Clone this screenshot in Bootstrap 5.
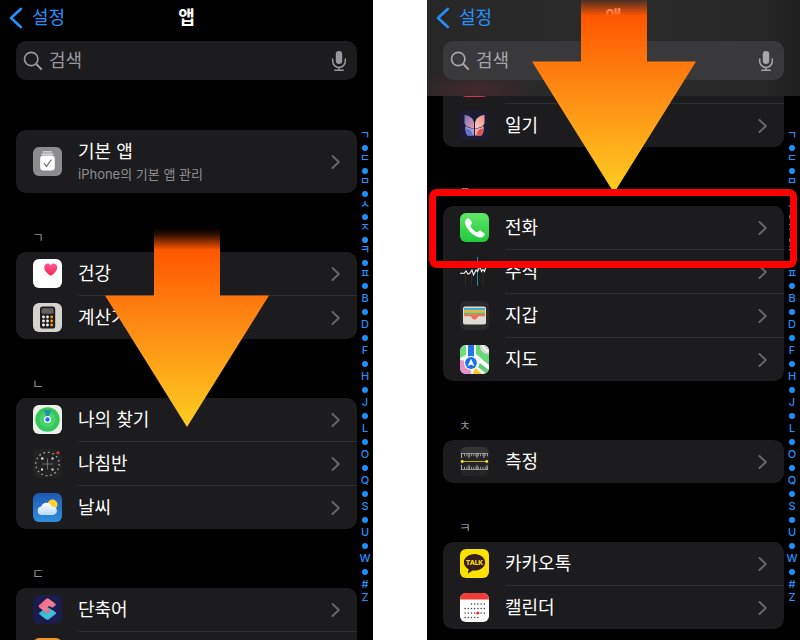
<!DOCTYPE html>
<html lang="ko" data-bs-theme="dark">
<head>
<meta charset="utf-8">
<meta name="viewport" content="width=device-width, initial-scale=1">
<title>설정 - 앱</title>
<link href="https://cdn.jsdelivr.net/npm/bootstrap@5.3.0/dist/css/bootstrap.min.css" rel="stylesheet">
<style>
  body { background: #fff; color: #fff; font-family: Inter, "Noto Sans CJK KR", sans-serif; font-size: 18px; line-height: 24px; }
  .screens { gap: 54px; height: 100vh; }
  .phone { flex: 1 1 0; min-width: 0; background: #000; }
  .phone a { text-decoration: none; }
  .title-bar { grid-template-columns: 1fr auto 1fr; height: 36px; padding: 0 9px; }
  .title-bar a { color: #2490fb; gap: 9px; }
  .title-bar h1 { font-size: 18px; line-height: 24px; font-weight: 700; }
  .top-area { padding-bottom: 16px; z-index: 1; }
  .top-area.frosted { background: radial-gradient(ellipse 60px 24px at 48px 90px, #43282c 0, transparent 100%), linear-gradient(90deg, #282728, #2b2b2c 50%, #272728 90%, #1e1e1f); }
  .search-box { height: 39px; margin: 5px 16px 0; padding: 0 10px 0 7px; border-radius: 10px; background: #1c1c1e; color: #98989f; gap: 6px; }
  .frosted .search-box { background: #39393b; color: #a5a5ab; }
  .search-box input { background: none; border: 0; outline: 0; color: inherit; padding: 0; min-width: 0; line-height: 24px; }
  .search-box input::placeholder { color: inherit; opacity: 1; }
  .search-box .voice { color: inherit; }
  .app-list { padding-left: 16px; min-width: 0; }
  .app-list.first { padding-top: 34px; }
  .app-list.scrolled { margin-top: -36px; }
  .app-group { background: #1c1c1e; border-radius: 10px; overflow: hidden; }
  .app-row { padding-left: 17px; gap: 16px; color: #fff; }
  .app-row:hover { color: #fff; }
  .app-row > svg { width: 29px; height: 29px; flex: none; border-radius: 6px; }
  .app-row > span { min-height: 43px; padding-right: 16px; }
  .app-row + .app-row > span { min-height: 44px; border-top: 1px solid #2e2e30; }
  .app-row.two-line > span { min-height: 63px; }
  .app-row.peek-top > svg { margin-top: 2px; }
  .app-row.peek-bottom > svg { margin-bottom: 2px; }
  .chev { width: 10px; height: 16px; flex: none; color: #66666a; }
  .sub-text { font-size: 13px; line-height: 20px; color: #8e8e94; }
  .letter-head { height: 59px; padding: 0 0 6px 16px; font-size: 13px; line-height: 18px; font-weight: 400; color: #8e8e94; margin: 0; }
  .index-bar { width: 16px; flex: none; margin-top: 34px; padding: 0; color: #2490fb; font-size: 11px; font-weight: 500; text-align: center; list-style: none; }
  .index-bar li { height: 13px; line-height: 13px; }
  .index-bar li.ko { height: 12px; line-height: 10px; font-size: 11px; }
  .index-bar li.dot, .index-bar li.kdot { display: flex; align-items: center; justify-content: center; }
  .index-bar li.kdot { height: 11px; }
  .index-bar li.dot::before, .index-bar li.kdot::before { content: ""; width: 6px; height: 6px; border-radius: 50%; background: #1b8ffc; }
  .index-bar li.first-latin { margin-top: 1px; }
  .arrow { position: absolute; width: 164px; height: 200px; z-index: 2; pointer-events: none; }
  .arrow-left { left: 105px; top: 228px; }
  .arrow-right { left: 105px; top: -6px; }
  .callout { position: absolute; left: 2px; right: 3px; top: 189px; height: 79px; border: 7px solid #f00; border-radius: 8px; z-index: 3; pointer-events: none; }
</style>
</head>
<body>
<svg width="0" height="0" class="position-absolute" aria-hidden="true">
  <defs>
    <linearGradient id="flame" x1="0" y1="0" x2="0" y2="1">
      <stop offset="0" stop-color="#ff5000" stop-opacity="0"/>
      <stop offset=".03" stop-color="#ff5000" stop-opacity=".15"/>
      <stop offset=".11" stop-color="#ff5600"/>
      <stop offset=".5" stop-color="#ff8c14"/>
      <stop offset="1" stop-color="#fdcd20"/>
    </linearGradient>
    <linearGradient id="phoneGreen" x1="0" y1="0" x2="0" y2="1"><stop offset="0" stop-color="#61e768"/><stop offset="1" stop-color="#1fc93b"/></linearGradient>
    <linearGradient id="sky" x1="0" y1="0" x2="0" y2="1"><stop offset="0" stop-color="#1c59b4"/><stop offset="1" stop-color="#2f8fdd"/></linearGradient>
    <linearGradient id="heart" x1="0" y1="0" x2="0" y2="1"><stop offset="0" stop-color="#ff59a0"/><stop offset="1" stop-color="#fa2440"/></linearGradient>
    <linearGradient id="cloud" x1="0" y1="0" x2="0" y2="1"><stop offset="0" stop-color="#fff"/><stop offset="1" stop-color="#b8d9f6"/></linearGradient>
    <linearGradient id="cutA" x1="0" y1="0" x2="1" y2="1"><stop offset="0" stop-color="#f0508c"/><stop offset=".5" stop-color="#f3808e"/><stop offset="1" stop-color="#d855a8"/></linearGradient>
    <linearGradient id="cutB" x1="0" y1="0" x2="1" y2="1"><stop offset="0" stop-color="#2ea0f0"/><stop offset=".6" stop-color="#38c8cf"/><stop offset="1" stop-color="#5d78e8"/></linearGradient>
    <linearGradient id="wingL" x1="0" y1="0" x2="1" y2="1"><stop offset="0" stop-color="#7573b4"/><stop offset="1" stop-color="#e99ab0"/></linearGradient>
    <linearGradient id="wingR" x1="1" y1="0" x2="0" y2="1"><stop offset="0" stop-color="#f08f84"/><stop offset="1" stop-color="#f7cdc6"/></linearGradient>
    <symbol id="chevron" viewBox="0 0 10 16"><path d="M1.500 2 7.800 8l-6.300 6" fill="none" stroke="currentColor" stroke-width="2" stroke-linecap="round" stroke-linejoin="round"/></symbol>
    <symbol id="back" viewBox="0 0 14 22"><path d="M11.800 2 2 11l9.800 9" fill="none" stroke="currentColor" stroke-width="2.600" stroke-linecap="round" stroke-linejoin="round"/></symbol>
    <symbol id="lens" viewBox="0 0 20 20"><circle cx="8.200" cy="8" r="6.700" fill="none" stroke="currentColor" stroke-width="1.700"/><path d="m13.200 13 5 5" stroke="currentColor" stroke-width="2" stroke-linecap="round"/></symbol>
    <symbol id="mic" viewBox="0 0 16 22"><rect x="4.800" y="1" width="6.400" height="13" rx="3.200" fill="currentColor"/><path d="M1.700 9v2.200a6.300 6.300 0 0 0 12.600 0V9M8 17.600V20M3.800 20.200h8.400" fill="none" stroke="currentColor" stroke-width="1.500" stroke-linecap="round"/></symbol>
    <symbol id="bigArrow" viewBox="0 0 164 200"><path d="M49 0h66v67.500h49L82 199 0 67.500h49z" fill="url(#flame)"/></symbol>
  </defs>
</svg>

<main class="screens d-flex overflow-hidden">

  <section class="phone position-relative d-flex flex-column overflow-hidden">
    <header class="top-area flex-shrink-0">
      <div class="title-bar d-grid align-items-center">
        <a href="#" class="d-flex align-items-center"><svg width="14" height="22" aria-hidden="true"><use href="#back"/></svg>설정</a>
        <h1 class="m-0">앱</h1>
      </div>
      <div class="search-box d-flex align-items-center">
        <label for="search-a" class="d-flex" aria-label="검색"><svg width="20" height="20"><use href="#lens"/></svg></label>
        <input id="search-a" type="text" class="flex-fill" placeholder="검색">
        <button type="button" class="voice btn p-0 border-0 d-flex" aria-label="음성 입력"><svg width="16" height="22"><use href="#mic"/></svg></button>
      </div>
    </header>

    <div class="d-flex">
      <div class="app-list first flex-fill">
        <div class="app-group">
          <a href="#" class="app-row two-line d-flex align-items-center">
            <svg viewBox="0 0 29 29"><rect width="29" height="29" fill="#8b8b90"/><path d="M10.500 4.900h8M8.900 7.200h11.200" stroke="#e6e6e8" stroke-width="1.300" stroke-linecap="round"/><rect x="7.200" y="8.600" width="14.600" height="15" rx="3.300" fill="#fff"/><path d="m11.200 16.600 2.300 2.800 4.500-6.300" fill="none" stroke="#77777c" stroke-width="1.300" stroke-linecap="round"/></svg>
            <span class="flex-fill d-flex align-items-center justify-content-between"><span>기본 앱<span class="sub-text d-block">iPhone의 기본 앱 관리</span></span><svg class="chev"><use href="#chevron"/></svg></span>
          </a>
        </div>

        <h2 class="letter-head d-flex align-items-end">ㄱ</h2>
        <div class="app-group">
          <a href="#" class="app-row d-flex align-items-center">
            <svg viewBox="0 0 29 29"><rect width="29" height="29" fill="#fff"/><path d="M17.700 16.800c-3-2-6.500-4.700-6.500-8.300 0-4.200 4.800-5.200 6.500-2 1.700-3.200 6.500-2.200 6.500 2 0 3.600-3.500 6.300-6.500 8.300z" fill="url(#heart)"/></svg>
            <span class="flex-fill d-flex align-items-center justify-content-between">건강<svg class="chev"><use href="#chevron"/></svg></span>
          </a>
          <a href="#" class="app-row d-flex align-items-center">
            <svg viewBox="0 0 29 29"><rect width="29" height="29" fill="#d4d3ce"/><rect x="7" y="3.500" width="15.200" height="22" rx="2.600" fill="#1d1d1d"/><rect x="8.600" y="5.300" width="12" height="5.500" rx="1.200" fill="#62625f"/><g fill="#f4f4f4"><circle cx="10.500" cy="14" r="1.400"/><circle cx="14.500" cy="14" r="1.400"/><circle cx="10.500" cy="18" r="1.400"/><circle cx="14.500" cy="18" r="1.400"/><circle cx="10.500" cy="22" r="1.400"/><circle cx="14.500" cy="22" r="1.400"/></g><g fill="#ff9a0a"><circle cx="18.700" cy="14" r="1.400"/><circle cx="18.700" cy="18" r="1.400"/><circle cx="18.700" cy="22" r="1.400"/></g></svg>
            <span class="flex-fill d-flex align-items-center justify-content-between">계산기<svg class="chev"><use href="#chevron"/></svg></span>
          </a>
        </div>

        <h2 class="letter-head d-flex align-items-end">ㄴ</h2>
        <div class="app-group">
          <a href="#" class="app-row d-flex align-items-center">
            <svg viewBox="0 0 29 29"><rect width="29" height="29" fill="#edf0ea"/><circle cx="14.500" cy="14.500" r="12.200" fill="#35c75a"/><circle cx="14.500" cy="14.500" r="8" fill="#4bd26c"/><path d="M14.500 14.500 10.700 5h7.600z" fill="#2290a5"/><circle cx="14.500" cy="14.500" r="3.500" fill="#fff"/><circle cx="14.500" cy="14.500" r="2.200" fill="#1872f0"/></svg>
            <span class="flex-fill d-flex align-items-center justify-content-between">나의 찾기<svg class="chev"><use href="#chevron"/></svg></span>
          </a>
          <a href="#" class="app-row d-flex align-items-center">
            <svg viewBox="0 0 29 29"><rect width="29" height="29" fill="#232324"/><circle cx="14.500" cy="15" r="11.700" fill="none" stroke="#a8a8a8" stroke-width="1.300" stroke-dasharray="1.700 2.900"/><path d="M14.500 9.500v11M9 15h11" stroke="#8d8d8d" stroke-width=".7"/><path d="M8 9.500h2.500M18.500 9.500h2M8 20.500h2M18.500 20.500h2" stroke="#e4e4e4" stroke-width="1.900"/><path d="m22.500 4 3.200-2 .8 3.500z" fill="#f33b30"/></svg>
            <span class="flex-fill d-flex align-items-center justify-content-between">나침반<svg class="chev"><use href="#chevron"/></svg></span>
          </a>
          <a href="#" class="app-row d-flex align-items-center">
            <svg viewBox="0 0 29 29"><rect width="29" height="29" fill="url(#sky)"/><circle cx="19.500" cy="11.500" r="5" fill="#ffcf2e"/><path d="M8.500 22a4.300 4.300 0 0 1-.3-8.500 5.600 5.600 0 0 1 10.500 0 4.300 4.300 0 1 1 1 8.500z" fill="url(#cloud)"/></svg>
            <span class="flex-fill d-flex align-items-center justify-content-between">날씨<svg class="chev"><use href="#chevron"/></svg></span>
          </a>
        </div>

        <h2 class="letter-head d-flex align-items-end">ㄷ</h2>
        <div class="app-group">
          <a href="#" class="app-row d-flex align-items-center">
            <svg viewBox="0 0 29 29"><rect width="29" height="29" fill="#1b1c4e"/><path d="m6.500 17.500 8-5.500 8.200 5.200q1 1-.2 2l-6.800 5.200q-1.200.8-2.400 0l-6.700-5q-1.100-1-.1-1.900z" fill="url(#cutB)"/><path d="M13.200 3.700q1.300-.8 2.600 0l6.600 5q1 1 0 1.900l-2.900 2.200-3.700-1.700-1.800 1.700 4 3.300-2.500 1.900q-1 .6-2 0l-7.500-5.700q-1-1 0-2z" fill="url(#cutA)"/></svg>
            <span class="flex-fill d-flex align-items-center justify-content-between">단축어<svg class="chev"><use href="#chevron"/></svg></span>
          </a>
          <div class="app-row peek-bottom d-flex align-items-center" aria-hidden="true">
            <svg viewBox="0 0 29 29"><rect width="29" height="29" fill="#f0932a"/></svg>
            <span class="flex-fill"></span>
          </div>
        </div>
      </div>
      <ul class="index-bar">
        <li class="ko">ㄱ</li><li class="kdot"></li><li class="ko">ㄷ</li><li class="kdot"></li><li class="ko">ㅁ</li><li class="kdot"></li><li class="ko">ㅅ</li><li class="kdot"></li><li class="ko">ㅈ</li><li class="kdot"></li><li class="ko">ㅋ</li><li class="kdot"></li><li class="ko">ㅍ</li><li class="kdot"></li>
        <li class="first-latin">B</li><li class="dot"></li><li>D</li><li class="dot"></li><li>F</li><li class="dot"></li><li>H</li><li class="dot"></li><li>J</li><li class="dot"></li><li>L</li><li class="dot"></li><li>O</li><li class="dot"></li><li>Q</li><li class="dot"></li><li>S</li><li class="dot"></li><li>U</li><li class="dot"></li><li>W</li><li class="dot"></li><li>#</li><li>Z</li>
      </ul>
    </div>
    <svg class="arrow arrow-left" aria-hidden="true"><use href="#bigArrow"/></svg>
  </section>

  <section class="phone position-relative d-flex flex-column overflow-hidden">
    <header class="top-area frosted position-relative flex-shrink-0">
      <div class="title-bar d-grid align-items-center">
        <a href="#" class="d-flex align-items-center"><svg width="14" height="22" aria-hidden="true"><use href="#back"/></svg>설정</a>
        <h1 class="m-0">앱</h1>
      </div>
      <div class="search-box d-flex align-items-center">
        <label for="search-b" class="d-flex" aria-label="검색"><svg width="20" height="20"><use href="#lens"/></svg></label>
        <input id="search-b" type="text" class="flex-fill" placeholder="검색">
        <button type="button" class="voice btn p-0 border-0 d-flex" aria-label="음성 입력"><svg width="16" height="22"><use href="#mic"/></svg></button>
      </div>
    </header>

    <div class="d-flex">
      <div class="app-list scrolled flex-fill">
        <div class="app-group">
          <div class="app-row peek-top d-flex align-items-center" aria-hidden="true">
            <svg viewBox="0 0 29 29"><rect width="29" height="29" fill="#d93250"/></svg>
            <span class="flex-fill"></span>
          </div>
          <a href="#" class="app-row d-flex align-items-center">
            <svg viewBox="0 0 29 29"><rect width="29" height="29" fill="#1c1c36"/><path d="M4.500 4c5 .5 9 3.500 9.500 8v5.500c-5-.5-9-2.500-9.500-5.500z" fill="url(#wingL)"/><path d="M24.500 4c-5 .5-9 3.500-9.500 8v5.500c5-.5 9-2.500 9.500-5.500z" fill="url(#wingR)"/><path d="M5.500 15c2.500 1.800 5 2.500 8.500 2.800v6.700H7.500C5.500 22 5 18.500 5.500 15z" fill="#a9a1d4"/><path d="M23.500 15c-2.500 1.800-5 2.500-8.500 2.800v6.700h6.500c2-2.500 2.500-6 2-9.500z" fill="#f3b0a8"/><path d="M6 17.500c4 0 6.500 3 6.500 7h-5C6 22.500 6 20.500 6 17.500z" fill="#6172dc"/><path d="M23 17.500c-4 0-6.500 3-6.500 7h5c1.500-2 1.500-4 1.500-7z" fill="#de5552"/></svg>
            <span class="flex-fill d-flex align-items-center justify-content-between">일기<svg class="chev"><use href="#chevron"/></svg></span>
          </a>
        </div>

        <h2 class="letter-head d-flex align-items-end">ㅈ</h2>
        <div class="app-group">
          <a href="#" class="app-row d-flex align-items-center">
            <svg viewBox="0 0 29 29"><rect width="29" height="29" fill="url(#phoneGreen)"/><path d="M6.200 6.300C7.500 4.900 8.700 4.900 9.600 6l2.100 3.100c.7 1.100.4 1.900-.5 2.700-.9.800-1 1.300-.4 2.300 1.200 2 3.300 3.900 5.300 5 .9.500 1.400.3 2.100-.6.900-1.100 1.700-1.300 2.800-.6l2.900 2c1.200.9 1.100 2.100-.2 3.400-1.900 1.900-4.700 1.400-7.500 0-4.400-2.300-7.700-5.700-9.900-9.900C4.800 10.600 4.500 8 6.200 6.300z" fill="#fff"/></svg>
            <span class="flex-fill d-flex align-items-center justify-content-between">전화<svg class="chev"><use href="#chevron"/></svg></span>
          </a>
          <a href="#" class="app-row d-flex align-items-center">
            <svg viewBox="0 0 29 29"><rect width="29" height="29" fill="#1b1b1c"/><path d="M5.500 10v19M11.500 12v17M23 12v17" stroke="#303033" stroke-width=".8"/><path d="M17.500 0v29" stroke="#1c86b5" stroke-width="1"/><path d="m0 16.500 2-.5 2 .5 2-2.500 2 3 1.500-.5 2.500-3.500 1.500 5 2.500-5 1.500 1.500 2.500-5 1.500 5 1.500-2 1.500 2 1.500-5 1.500 1L29 9" fill="none" stroke="#f1f1f1" stroke-width="1.100"/></svg>
            <span class="flex-fill d-flex align-items-center justify-content-between">주식<svg class="chev"><use href="#chevron"/></svg></span>
          </a>
          <a href="#" class="app-row d-flex align-items-center">
            <svg viewBox="0 0 29 29"><rect width="29" height="29" fill="#29292b"/><rect x="3" y="5.500" width="23" height="18" rx="2" fill="#dedcd5"/><path d="M4 8.200h21" stroke="#45a6d8" stroke-width="2.200"/><path d="M4 10.400h21" stroke="#e6b62c" stroke-width="2.200"/><path d="M4 12.400h21" stroke="#67b85a" stroke-width="2"/><path d="M4 13.200h21v2h-6.500c-1 0-1.300 3.300-4 3.300s-3-3.300-4-3.300H4z" fill="#ed6d56"/></svg>
            <span class="flex-fill d-flex align-items-center justify-content-between">지갑<svg class="chev"><use href="#chevron"/></svg></span>
          </a>
          <a href="#" class="app-row d-flex align-items-center">
            <svg viewBox="0 0 29 29"><rect width="29" height="29" fill="#f3f3ee"/><path d="M0 0h6v10L0 13z" fill="#6fdc7d"/><path d="M16 0h13v20L16 9z" fill="#66d878"/><path d="M20 0a8 8 0 0 0 9 9V0z" fill="#d6dbd4"/><path d="M23 0a6 6 0 0 0 6 6" fill="none" stroke="#fff" stroke-width="1.500"/><path d="M0 15c7 0 11 7 11 14H0z" fill="#e992c9"/><path d="m15 23 7 6h-9z" fill="#fbc51c"/><path d="m20 18 9 7v4h-2l-9-7z" fill="#63cc78"/><path d="M14 10 29 23" stroke="#fff" stroke-width="3.500"/><path d="M8 0h6v14H8z" fill="#2375e6"/><circle cx="11" cy="18" r="7" fill="#fff"/><circle cx="11" cy="18" r="5.900" fill="#1a70e8"/><path d="m11 13.700 3.500 7.600L11 19.600l-3.500 1.700z" fill="#fff"/></svg>
            <span class="flex-fill d-flex align-items-center justify-content-between">지도<svg class="chev"><use href="#chevron"/></svg></span>
          </a>
        </div>

        <h2 class="letter-head d-flex align-items-end">ㅊ</h2>
        <div class="app-group">
          <a href="#" class="app-row d-flex align-items-center">
            <svg viewBox="0 0 29 29"><rect width="29" height="29" fill="#242425"/><path d="M0 0h29v6H0z" fill="#343435"/><path d="M1 6.500h27M1 22.500h27" stroke="#8f8f8f" stroke-width="1"/><path d="M1.500 6v5M9 6v5M17 6v5M24 6v5M1.500 18v5M9 18v5M17 18v5M27 18v5" stroke="#bbb" stroke-width=".9"/><path d="M4 8h24M4 21h24" stroke="#9a9a9a" stroke-width="2.500" stroke-dasharray="1 1.300"/><path d="M2 14.500h25" stroke="#bcae20" stroke-width="1"/><circle cx="2.200" cy="14.500" r="1.400" fill="#f4e536"/><circle cx="26.800" cy="14.500" r="1.400" fill="#f4e536"/></svg>
            <span class="flex-fill d-flex align-items-center justify-content-between">측정<svg class="chev"><use href="#chevron"/></svg></span>
          </a>
        </div>

        <h2 class="letter-head d-flex align-items-end">ㅋ</h2>
        <div class="app-group">
          <a href="#" class="app-row d-flex align-items-center">
            <svg viewBox="0 0 29 29"><rect width="29" height="29" fill="#fae100"/><path d="M14.500 5C8.500 5 3.900 8.700 3.900 13.300c0 3 1.900 5.500 4.800 7l-1 4.500 4.800-3.300c6.900.7 12.600-2.800 12.600-8.200C25.100 8.700 20.500 5 14.500 5z" fill="#371d1e"/><text x="14.500" y="16.300" text-anchor="middle" font-size="6.500" font-weight="800" fill="#fae100" font-family="Inter, sans-serif">TALK</text></svg>
            <span class="flex-fill d-flex align-items-center justify-content-between">카카오톡<svg class="chev"><use href="#chevron"/></svg></span>
          </a>
          <a href="#" class="app-row d-flex align-items-center">
            <svg viewBox="0 0 29 29"><rect width="29" height="29" fill="#fff"/><path d="M0 0h29v6.500H0z" fill="#f13c36"/><g stroke="#39393b" stroke-width="1.500" stroke-linecap="round" stroke-dasharray="0 3.200"><path d="M11.500 11h13.500M5.100 15.500h20M5.100 20h20M5.100 24.500h13"/></g><circle cx="17.800" cy="20" r="1.600" fill="#ed2c2c"/></svg>
            <span class="flex-fill d-flex align-items-center justify-content-between">캘린더<svg class="chev"><use href="#chevron"/></svg></span>
          </a>
        </div>
      </div>
      <ul class="index-bar">
        <li class="ko">ㄱ</li><li class="kdot"></li><li class="ko">ㄷ</li><li class="kdot"></li><li class="ko">ㅁ</li><li class="kdot"></li><li class="ko">ㅅ</li><li class="kdot"></li><li class="ko">ㅈ</li><li class="kdot"></li><li class="ko">ㅋ</li><li class="kdot"></li><li class="ko">ㅍ</li><li class="kdot"></li>
        <li class="first-latin">B</li><li class="dot"></li><li>D</li><li class="dot"></li><li>F</li><li class="dot"></li><li>H</li><li class="dot"></li><li>J</li><li class="dot"></li><li>L</li><li class="dot"></li><li>O</li><li class="dot"></li><li>Q</li><li class="dot"></li><li>S</li><li class="dot"></li><li>U</li><li class="dot"></li><li>W</li><li class="dot"></li><li>#</li><li>Z</li>
      </ul>
    </div>
    <svg class="arrow arrow-right" aria-hidden="true"><use href="#bigArrow"/></svg>
    <div class="callout"></div>
  </section>

</main>
<script src="https://cdn.jsdelivr.net/npm/bootstrap@5.3.0/dist/js/bootstrap.bundle.min.js"></script>
</body>
</html>
